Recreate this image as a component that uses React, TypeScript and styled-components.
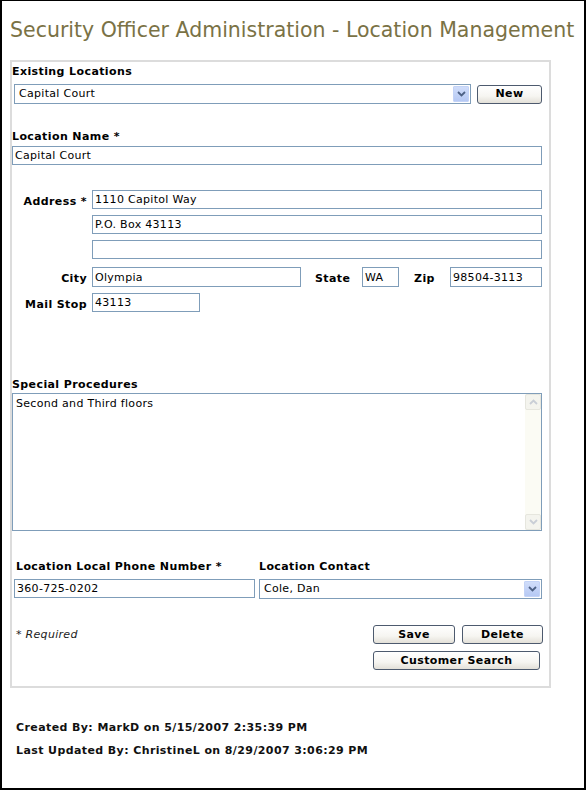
import styled, { createGlobalStyle } from "styled-components";

const GlobalStyle = createGlobalStyle`
  html, body {
    margin: 0;
    padding: 0;
    background: #fff;
  }
  body {
    font-family: "DejaVu Sans", Verdana, sans-serif;
    font-size: 11px;
    letter-spacing: 0.3px;
    color: #000;
  }
`;

const Frame = styled.div`
  box-sizing: border-box;
  width: 586px;
  height: 790px;
  border: 2px solid #000;
  border-top-width: 1px;
  padding: 0 0 0 8px;
`;

const Title = styled.h1`
  margin: 0;
  padding-top: 14px;
  font-family: "DejaVu Sans", Verdana, sans-serif;
  font-weight: normal;
  font-size: 20.5px;
  letter-spacing: 0;
  line-height: 30px;
  color: #7a7245;
  white-space: nowrap;
`;

const Panel = styled.div`
  box-sizing: border-box;
  width: 541px;
  margin-top: 15px;
  border: 2px solid #dcdcdc;
  padding: 3px 7px 16px 0;
`;

const Label = styled.div<{ $indent?: number; $top?: number }>`
  font-weight: bold;
  letter-spacing: 0.4px;
  line-height: 14px;
  white-space: nowrap;
  margin-left: ${(p) => p.$indent ?? 0}px;
  margin-top: ${(p) => p.$top ?? 0}px;
`;

const TextInput = styled.input<{ $w?: number; $h?: number; $top?: number }>`
  box-sizing: border-box;
  display: block;
  width: ${(p) => (p.$w ? `${p.$w}px` : "100%")};
  min-width: 0;
  height: ${(p) => p.$h ?? 19}px;
  margin: ${(p) => p.$top ?? 0}px 0 0 0;
  border: 1px solid #7f9db9;
  padding: 0 2px;
  font-family: inherit;
  font-size: 11px;
  letter-spacing: 0.3px;
  color: #000;
  background: #fff;
  outline: none;
`;

const FlexInput = styled(TextInput)`
  flex: 1;
  width: auto;
`;

const Row = styled.div<{ $top?: number; $indent?: number; $gap?: number }>`
  display: flex;
  align-items: center;
  min-width: 0;
  gap: ${(p) => p.$gap ?? 6}px;
  margin-top: ${(p) => p.$top ?? 0}px;
  margin-left: ${(p) => p.$indent ?? 0}px;
`;

const SelectBox = styled.div<{ $w?: number }>`
  box-sizing: border-box;
  display: flex;
  align-items: stretch;
  width: ${(p) => (p.$w ? `${p.$w}px` : "auto")};
  flex: ${(p) => (p.$w ? "none" : "1")};
  height: 20px;
  border: 1px solid #7f9db9;
  background: #fff;
`;

const SelectText = styled.span`
  flex: 1;
  padding-left: 4px;
  line-height: 18px;
`;

const ArrowBox = styled.span`
  display: flex;
  align-items: center;
  justify-content: center;
  width: 16px;
  margin: 1px;
  border-radius: 1px;
  background: linear-gradient(#d0ddfa, #b6c9f4);
  border: 1px solid #c3d3f7;
  box-sizing: border-box;
`;

const Button = styled.button<{ $w: number }>`
  box-sizing: border-box;
  width: ${(p) => p.$w}px;
  height: 19px;
  padding: 0;
  border: 1px solid #4d5a6e;
  border-radius: 3px;
  background: linear-gradient(#ffffff, #f6f5f1 60%, #e3e0d8);
  font-family: inherit;
  font-size: 11px;
  font-weight: bold;
  letter-spacing: 0.4px;
  color: #000;
  line-height: 16px;
  cursor: pointer;
`;

const AddressGrid = styled.div`
  display: grid;
  grid-template-columns: 75px minmax(0, 1fr);
  column-gap: 5px;
  row-gap: 6px;
  align-items: center;
  margin-top: 25px;
`;

const GridLabel = styled.div<{ $top?: number }>`
  font-weight: bold;
  letter-spacing: 0.4px;
  text-align: right;
  white-space: nowrap;
  padding-top: 3px;
  margin-top: ${(p) => p.$top ?? 0}px;
`;

const SideLabel = styled.span<{ $w: number; $pad: number }>`
  flex: none;
  box-sizing: border-box;
  width: ${(p) => p.$w}px;
  padding: 3px 0 0 ${(p) => p.$pad}px;
  font-weight: bold;
  letter-spacing: 0.4px;
  white-space: nowrap;
`;

const Empty = styled.div``;

const AreaBox = styled.div`
  box-sizing: border-box;
  display: flex;
  height: 138px;
  margin-top: 1px;
  border: 1px solid #7f9db9;
  background: #fff;
`;

const Area = styled.textarea`
  flex: 1;
  margin: 0;
  border: none;
  padding: 3px 3px;
  resize: none;
  overflow: hidden;
  font-family: inherit;
  font-size: 11px;
  letter-spacing: 0.3px;
  line-height: 14px;
  outline: none;
`;

const ScrollTrack = styled.div`
  width: 16px;
  display: flex;
  flex-direction: column;
  justify-content: space-between;
  background: #fbfbf4;
`;

const ScrollBtn = styled.span`
  box-sizing: border-box;
  display: flex;
  align-items: center;
  justify-content: center;
  height: 16px;
  border: 1px solid #e6e6de;
  border-radius: 2px;
  background: #f4f4ee;
`;

const TwoCols = styled.div<{ $top: number }>`
  display: grid;
  grid-template-columns: 245px 1fr;
  margin-top: ${(p) => p.$top}px;
`;

const ColHead = styled.div<{ $indent?: number }>`
  font-weight: bold;
  letter-spacing: 0.4px;
  white-space: nowrap;
  line-height: 14px;
  padding-left: ${(p) => p.$indent ?? 0}px;
  margin-bottom: 5px;
`;

const ColBody = styled.div<{ $indent?: number }>`
  padding-left: ${(p) => p.$indent ?? 0}px;
  display: flex;
`;

const ActionRow = styled.div`
  display: flex;
  justify-content: space-between;
  margin-top: 26px;
`;

const Required = styled.span`
  font-style: italic;
  color: #222;
  margin-left: 4px;
  line-height: 19px;
`;

const ButtonStack = styled.div`
  display: grid;
  grid-template-columns: 82px 81px;
  column-gap: 7px;
  row-gap: 7px;
  margin-right: -1px;
`;

const WideSlot = styled.div`
  grid-column: 1 / span 2;
`;

const Footer = styled.div`
  margin-top: 33px;
  padding-left: 6px;
  font-weight: bold;
  letter-spacing: 0.4px;
  color: #111;
`;

const FooterLine = styled.div`
  line-height: 14px;
  & + & {
    margin-top: 9px;
  }
`;

const Chevron = ({ up, color }: { up?: boolean; color: string }) => (
  <svg width="9" height="6" viewBox="0 0 9 6">
    <path
      d={up ? "M1 5 L4.5 1.5 L8 5" : "M1 1 L4.5 4.5 L8 1"}
      fill="none"
      stroke={color}
      strokeWidth="1.8"
    />
  </svg>
);

const Select = ({ value, w }: { value: string; w?: number }) => (
  <SelectBox $w={w}>
    <SelectText>{value}</SelectText>
    <ArrowBox>
      <Chevron color="#4d6185" />
    </ArrowBox>
  </SelectBox>
);

export default function App() {
  return (
    <>
      <GlobalStyle />
      <Frame>
        <Title>Security Officer Administration - Location Management</Title>
        <Panel>
          <Label>Existing Locations</Label>
          <Row $top={5} $indent={2} $gap={6}>
            <Select value="Capital Court" w={457} />
            <Button $w={66}>New</Button>
          </Row>

          <Label $top={26}>Location Name *</Label>
          <TextInput $w={530} $top={2} defaultValue="Capital Court" />

          <AddressGrid>
            <GridLabel>Address *</GridLabel>
            <TextInput defaultValue="1110 Capitol Way" />
            <Empty />
            <TextInput defaultValue="P.O. Box 43113" />
            <Empty />
            <TextInput defaultValue="" />
            <GridLabel $top={2}>City</GridLabel>
            <Row $gap={0} $top={2}>
              <TextInput $w={209} $h={20} defaultValue="Olympia" />
              <SideLabel $w={61} $pad={14}>State</SideLabel>
              <TextInput $w={37} $h={20} defaultValue="WA" />
              <SideLabel $w={51} $pad={15}>Zip</SideLabel>
              <FlexInput $h={20} defaultValue="98504-3113" />
            </Row>
            <GridLabel>Mail Stop</GridLabel>
            <TextInput $w={108} defaultValue="43113" />
          </AddressGrid>

          <Label $top={66}>Special Procedures</Label>
          <AreaBox>
            <Area defaultValue="Second and Third floors" />
            <ScrollTrack>
              <ScrollBtn>
                <Chevron up color="#c9ced6" />
              </ScrollBtn>
              <ScrollBtn>
                <Chevron color="#c9ced6" />
              </ScrollBtn>
            </ScrollTrack>
          </AreaBox>

          <TwoCols $top={29}>
            <div>
              <ColHead $indent={4}>Location Local Phone Number *</ColHead>
              <ColBody $indent={2}>
                <TextInput $w={241} defaultValue="360-725-0202" />
              </ColBody>
            </div>
            <div>
              <ColHead $indent={2}>Location Contact</ColHead>
              <ColBody $indent={2}>
                <Select value="Cole, Dan" />
              </ColBody>
            </div>
          </TwoCols>

          <ActionRow>
            <Required>* Required</Required>
            <ButtonStack>
              <Button $w={82}>Save</Button>
              <Button $w={81}>Delete</Button>
              <WideSlot>
                <Button $w={167}>Customer Search</Button>
              </WideSlot>
            </ButtonStack>
          </ActionRow>
        </Panel>

        <Footer>
          <FooterLine>Created By: MarkD on 5/15/2007 2:35:39 PM</FooterLine>
          <FooterLine>Last Updated By: ChristineL on 8/29/2007 3:06:29 PM</FooterLine>
        </Footer>
      </Frame>
    </>
  );
}
